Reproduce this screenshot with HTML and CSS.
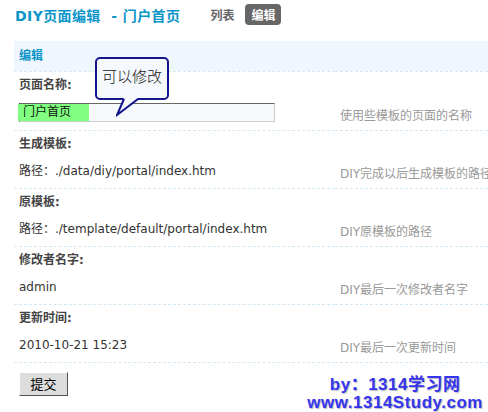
FILE: index.html
```html
<!DOCTYPE html>
<html lang="zh-CN">
<head>
    <meta charset="UTF-8">
    <title>DIY页面编辑</title>
    <link rel="stylesheet" href="styles.css">
</head>
<body>
    <div class="page-head">
        <h3 class="page-title">DIY页面编辑&nbsp; - 门户首页</h3>
        <a class="tab">列表</a>
        <a class="tab current">编辑</a>
    </div>

    <table class="form-table">
        <colgroup>
            <col class="col-value">
            <col class="col-tips">
        </colgroup>
        <tr class="band">
            <th colspan="2">编辑</th>
        </tr>
        <tr class="label-row">
            <td colspan="2">页面名称:</td>
        </tr>
        <tr class="value-row first">
            <td class="value">
                <div class="text-input"><span class="mark">门户首页</span></div>
            </td>
            <td class="tips">使用些模板的页面的名称</td>
        </tr>
        <tr class="label-row">
            <td colspan="2">生成模板:</td>
        </tr>
        <tr class="value-row">
            <td class="value">路径：./data/diy/portal/index.htm</td>
            <td class="tips">DIY完成以后生成模板的路径</td>
        </tr>
        <tr class="label-row">
            <td colspan="2">原模板:</td>
        </tr>
        <tr class="value-row">
            <td class="value">路径：./template/default/portal/index.htm</td>
            <td class="tips">DIY原模板的路径</td>
        </tr>
        <tr class="label-row">
            <td colspan="2">修改者名字:</td>
        </tr>
        <tr class="value-row">
            <td class="value">admin</td>
            <td class="tips">DIY最后一次修改者名字</td>
        </tr>
        <tr class="label-row">
            <td colspan="2">更新时间:</td>
        </tr>
        <tr class="value-row">
            <td class="value">2010-10-21 15:23</td>
            <td class="tips">DIY最后一次更新时间</td>
        </tr>
    </table>

    <div class="form-foot">
        <button class="submit-btn">提交</button>
    </div>

    <!-- annotation callout -->
    <div class="bubble">
        可以修改
        <svg class="bubble-tail" width="26" height="19" viewBox="0 0 26 19">
            <polygon points="8,0 22,0 1,17" fill="#f5f8fc"/>
            <polyline points="8,1 1,17 22,1" fill="none" stroke="#14148c" stroke-width="2"/>
        </svg>
    </div>

    <div class="watermark">
        <div>by：1314学习网</div>
        <div>www.1314Study.com</div>
    </div>
</body>
</html>
```

FILE: styles.css
```css
body {
    margin: 0;
    padding: 0;
    background-color: #fff;
    font-family: "DejaVu Sans", "Noto Sans CJK SC", sans-serif;
    font-size: 12px;
    color: #333;
    position: relative;
    height: 412px;
    overflow: hidden;
}

.page-head {
    display: flex;
    align-items: center;
    height: 29px;
    padding: 0 0 12px 15px;
}

.page-title {
    margin: 0 30px 0 0;
    font-size: 14px;
    font-weight: bold;
    color: #0a95c8;
    letter-spacing: 0.4px;
}

.tab {
    font-weight: bold;
    color: #666;
    margin-right: 11px;
}

.tab.current {
    background-color: #666;
    color: #fff;
    border-radius: 4px;
    padding: 2px 6px;
}

.form-table {
    margin-left: 14px;
    width: 474px;
    border-collapse: collapse;
    table-layout: fixed;
}

.col-value {
    width: 321px;
}

.form-table td,
.form-table th {
    padding: 0 0 0 5px;
    white-space: nowrap;
    line-height: 16px;
}

.band {
    height: 30px;
}

.band th {
    background-color: #eff6fd;
    text-align: left;
    color: #0a95c8;
    font-weight: bold;
    border-bottom: 1px dashed #d5e8f5;
}

.label-row {
    height: 28px;
}

.label-row td {
    font-weight: bold;
    color: #444;
}

.value-row {
    height: 30px;
}

.value-row.first {
    height: 31px;
}

.value-row td {
    border-bottom: 1px dashed #d5e8f5;
}

.value-row .value {
    padding-bottom: 3px;
}

.value-row .tips {
    color: #999;
    padding-top: 3px;
    overflow: visible;
}

.text-input {
    width: 254px;
    height: 17px;
    border-top: 1px solid #666;
    border-left: 1px solid #222;
    border-right: 1px solid #ccc;
    border-bottom: 1px solid #ccc;
    background-color: #f7fafd;
    line-height: 17px;
}

.mark {
    display: inline-block;
    width: 66px;
    margin-left: -2px;
    padding-left: 5px;
    background-color: #80ff80;
    color: #111;
}

.form-foot {
    padding: 9px 0 0 19px;
}

.submit-btn {
    width: 49px;
    height: 24px;
    background-color: #ddd;
    border: 1px solid #fff;
    border-right-color: #555;
    border-bottom-color: #555;
    font-family: "Noto Sans CJK SC", sans-serif;
    font-size: 13px;
    color: #000;
    padding: 0;
}

.bubble {
    position: absolute;
    left: 95px;
    top: 57px;
    width: 74px;
    height: 43px;
    border: 2px solid #14148c;
    border-radius: 5px;
    background-color: #f5f8fc;
    font-family: "Noto Sans CJK SC", sans-serif;
    font-size: 15px;
    font-weight: 300;
    color: #111;
    padding: 8px 0 0 5px;
    box-sizing: border-box;
    line-height: 18px;
}

.bubble-tail {
    position: absolute;
    left: 19px;
    top: 39px;
}

.watermark {
    position: absolute;
    right: 5px;
    bottom: 0;
    text-align: center;
    font-family: "Liberation Sans", "Noto Sans CJK SC", sans-serif;
    font-weight: bold;
    font-size: 17px;
    line-height: 18px;
    letter-spacing: 0.5px;
    color: #3535f0;
    text-shadow: 1px 1px 1px #bbb;
}
```
